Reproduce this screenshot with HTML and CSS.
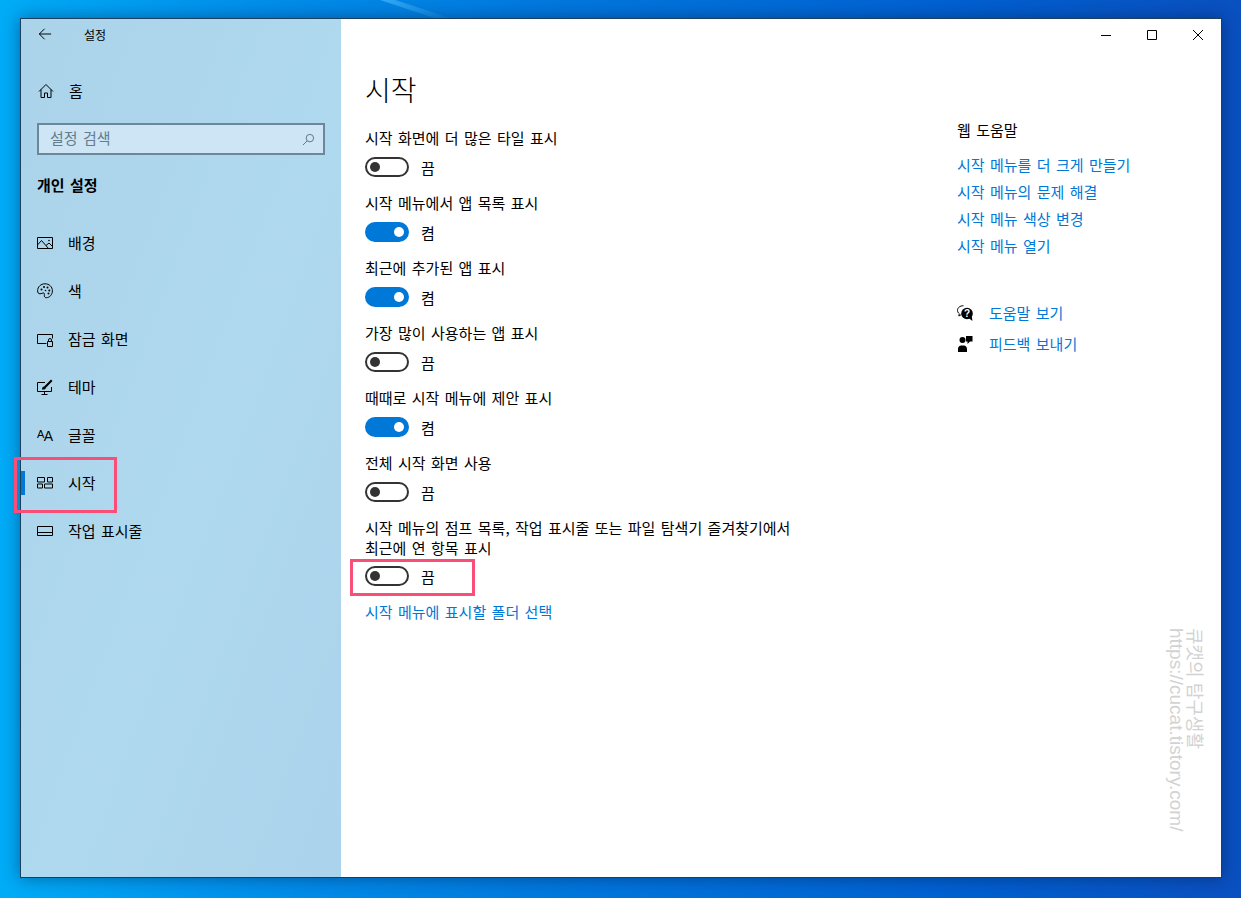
FILE: index.html
```html
<!DOCTYPE html>
<html lang="ko">
<head>
  <meta charset="UTF-8" />
  <meta name="viewport" content="width=device-width, initial-scale=1.0" />
  <title>설정 – 시작</title>
  <link rel="stylesheet" href="styles.css">
</head>
<body>
  <div class="streak"></div>

  <div class="window">
    <aside class="sidebar">
      <div class="titlebar">
        <svg class="back" viewBox="0 0 16 16"><path d="M15 8H1.500M7.500 2 1.500 8l6 6" /></svg>
        <span>설정</span>
      </div>

      <div class="home">
        <svg class="icon" viewBox="0 0 16 16"><path d="M1 8.500 8 1.500l7 7M3 6.500v8h3.500V10h3v4.500H13v-8" /></svg>
        <span>홈</span>
      </div>

      <div class="search">
        <span>설정 검색</span>
        <svg viewBox="0 0 14 14"><circle cx="8.500" cy="5.500" r="4" /><path d="M5.500 8.500 1 13" /></svg>
      </div>

      <h2>개인 설정</h2>

      <nav>
        <a class="item">
          <svg class="icon" viewBox="0 0 16 16"><path d="M.5 2.500h15v11H.5zM.5 10 4.500 5.500l7 8M9 10.500l3-2.500 3.500 3.500" /><circle class="dot" cx="12" cy="5.500" r=".8" /></svg>
          배경
        </a>
        <a class="item">
          <svg class="icon" viewBox="0 0 16 16"><path d="M8 .8C3.800.8.600 3.800.600 7.800c0 2 1 3 2.400 3 1.500 0 2.500-.9 3.400-.9 1.200 0 1 1.300.9 2.300-.1 1.600.6 2.500 1.900 2.500 3.700 0 6.200-3.300 6.200-6.900C15.400 3.800 12.200.8 8 .8z" /><circle class="dot" cx="4.500" cy="6.500" r="1" /><circle class="dot" cx="7" cy="4" r="1" /><circle class="dot" cx="10.500" cy="4.500" r="1" /><circle class="dot" cx="12.300" cy="7.500" r="1" /><circle class="dot" cx="11.500" cy="10.500" r="1" /><circle class="dot" cx="8.500" cy="7.500" r=".8" /></svg>
          색
        </a>
        <a class="item">
          <svg class="icon" viewBox="0 0 16 16"><path d="M9.500 12.500h-9v-9h15v4M10.500 10.500h5v5h-5zM11.500 10.500V9a1.500 1.500 0 0 1 3 0v1.500" /></svg>
          잠금 화면
        </a>
        <a class="item">
          <svg class="icon" viewBox="0 0 16 16"><path d="M8 3.500H.5v9h14V8M7.500 12.500v2.500M4.500 15.500h6" /><path class="solid" d="M5 10.500c0-2 .8-3 2.200-3L14 .5l1.500 1.500L8.700 9c0 1.200-1.500 1.700-3.700 1.500z" /></svg>
          테마
        </a>
        <a class="item">
          <span class="font-icon"><small>A</small>A</span>
          글꼴
        </a>
        <a class="item active">
          <svg class="icon" viewBox="0 0 16 16"><path d="M.5 2.500h7v4.500h-7zM10.500 2.500h5v4.500h-5zM.5 9h5v4h-5zM7.500 9h8v4h-8z" /></svg>
          시작
        </a>
        <a class="item">
          <svg class="icon" viewBox="0 0 16 16"><path d="M.5 3.500h15v9H.5zM.5 9.500h15" /></svg>
          작업 표시줄
        </a>
      </nav>
    </aside>

    <main class="content">
      <div class="controls">
        <button><svg viewBox="0 0 10 10"><path d="M0 5.500h10" /></svg></button>
        <button><svg viewBox="0 0 10 10"><path d="M.5.500h9v9h-9z" /></svg></button>
        <button><svg viewBox="0 0 10 10"><path d="M0 0l10 10M10 0 0 10" /></svg></button>
      </div>

      <div class="columns">
        <section class="settings">
          <h1>시작</h1>

          <div class="row">
            <label>시작 화면에 더 많은 타일 표시</label>
            <div class="switch"><span class="toggle"></span>끔</div>
          </div>
          <div class="row">
            <label>시작 메뉴에서 앱 목록 표시</label>
            <div class="switch"><span class="toggle on"></span>켬</div>
          </div>
          <div class="row">
            <label>최근에 추가된 앱 표시</label>
            <div class="switch"><span class="toggle on"></span>켬</div>
          </div>
          <div class="row">
            <label>가장 많이 사용하는 앱 표시</label>
            <div class="switch"><span class="toggle"></span>끔</div>
          </div>
          <div class="row">
            <label>때때로 시작 메뉴에 제안 표시</label>
            <div class="switch"><span class="toggle on"></span>켬</div>
          </div>
          <div class="row">
            <label>전체 시작 화면 사용</label>
            <div class="switch"><span class="toggle"></span>끔</div>
          </div>
          <div class="row">
            <label>시작 메뉴의 점프 목록, 작업 표시줄 또는 파일 탐색기 즐겨찾기에서 최근에 연 항목 표시</label>
            <div class="switch marked"><span class="toggle"></span>끔</div>
          </div>

          <a class="link">시작 메뉴에 표시할 폴더 선택</a>
        </section>

        <section class="help">
          <h3>웹 도움말</h3>
          <a class="link">시작 메뉴를 더 크게 만들기</a>
          <a class="link">시작 메뉴의 문제 해결</a>
          <a class="link">시작 메뉴 색상 변경</a>
          <a class="link">시작 메뉴 열기</a>

          <div class="help-actions">
            <a class="link">
              <svg viewBox="0 0 16 16"><path class="outline" d="M6.500.7C3 .7.500 2.700.500 5.300c0 1.400.7 2.600 1.800 3.400L1.800 11l2.700-1.500" /><circle cx="10" cy="8.500" r="5.800" /><path d="M11.500 13l4 3-.8-5z" /><text x="10" y="12" text-anchor="middle">?</text></svg>
              도움말 보기
            </a>
            <a class="link">
              <svg viewBox="0 0 16 16"><circle cx="5.500" cy="4" r="3" /><path d="M1 16v-3c0-2 1.500-3.500 3-3.500h3c1.500 0 3 1.500 3 3.500v3zM9 0h6.500v5.500H13L10.500 8V5.500H9z" /></svg>
              피드백 보내기
            </a>
          </div>
        </section>
      </div>

      <div class="watermark">
        <span class="blog">큐캣의 탐구생활</span>
        <span class="url">https://cucat.tistory.com/</span>
      </div>
    </main>
  </div>
</body>
</html>
```

FILE: styles.css
```css
*, *::before, *::after {
  box-sizing: border-box;
}

html, body {
  height: 100%;
}

body {
  margin: 0;
  padding: 18px 19px 20px 20px;
  overflow: hidden;
  position: relative;
  font-family: "Noto Sans CJK KR", "Noto Sans", sans-serif;
  font-size: 15px;
  word-spacing: 1.2px;
  color: #000;
  background: linear-gradient(90deg, #00acf7 0%, #0090ec 20%, #0078de 45%, #0062d2 75%, #0a50c0 100%);
}

.streak {
  position: absolute;
  top: 0;
  left: 380px;
  width: 70px;
  height: 18px;
  background: linear-gradient(90deg, rgba(70, 180, 250, .75), rgba(70, 180, 250, .1));
  clip-path: polygon(0 0, 22% 0, 100% 100%, 78% 100%);
}

.window {
  position: relative;
  display: flex;
  height: 860px;
  border: 1px solid #1c3f5f;
  background: #fff;
  box-shadow: 0 0 16px rgba(0, 20, 60, .45);
}

/* sidebar */
.sidebar {
  flex: 0 0 320px;
  padding: 0 16px;
  background: linear-gradient(110deg, #abd3ea 0%, #afd9ee 55%, #abd3ec 100%);
}

.titlebar {
  display: flex;
  align-items: center;
  height: 32px;
  padding-bottom: 2px;
  font-size: 12px;
  word-spacing: 0;
}

.back {
  width: 14px;
  height: 14px;
  margin: 0 32px 0 1px;
  fill: none;
  stroke: #000;
  stroke-width: 1.1;
}

.home {
  display: flex;
  align-items: center;
  gap: 15px;
  height: 48px;
  margin-top: 16px;
  padding: 0 0 2px 1px;
}

.icon {
  flex: none;
  width: 16px;
  height: 16px;
  margin-top: 2px;
  fill: none;
  stroke: #000;
  stroke-width: 1;
}

.icon .dot, .icon .solid {
  fill: #000;
  stroke: none;
}

.search {
  display: flex;
  align-items: center;
  justify-content: space-between;
  width: 288px;
  height: 32px;
  margin-top: 8px;
  padding: 0 8px 3px 11px;
  border: 2px solid #6c8799;
  background: #cde5f4;
  color: #667c8a;
}

.search svg {
  width: 13px;
  height: 13px;
  margin-top: 3px;
  fill: none;
  stroke: #5a6f7c;
  stroke-width: 1;
}

.sidebar h2 {
  height: 32px;
  margin: 14px 0 18px 0;
  font-size: 15px;
  font-weight: 700;
  line-height: 32px;
}

.item {
  position: relative;
  display: flex;
  align-items: center;
  gap: 15px;
  height: 48px;
  padding-bottom: 2px;
}

.font-icon {
  flex: none;
  width: 16px;
  margin-top: 2px;
  font-family: "Liberation Sans", sans-serif;
  font-size: 14px;
  line-height: 16px;
  letter-spacing: -.5px;
  white-space: nowrap;
}

.font-icon small {
  font-size: 11px;
  vertical-align: 3px;
}

.item.active::before {
  content: "";
  position: absolute;
  top: 12px;
  left: -16px;
  width: 4px;
  height: 24px;
  background: #0078d7;
}

.item.active::after {
  content: "";
  position: absolute;
  top: -2px;
  left: -23px;
  width: 103px;
  height: 56px;
  border: 3px solid #f94e78;
}

/* main */
.content {
  position: relative;
  flex: 1;
}

.controls {
  display: flex;
  justify-content: flex-end;
  height: 32px;
}

.controls button {
  width: 46px;
  height: 32px;
  padding: 0;
  border: none;
  background: transparent;
}

.controls svg {
  display: block;
  width: 10px;
  height: 10px;
  margin: 0 auto;
  fill: none;
  stroke: #000;
  stroke-width: 1;
}

.columns {
  display: grid;
  grid-template-columns: 616px 1fr;
}

.settings {
  padding-left: 24px;
}

h1 {
  height: 40px;
  margin: 18px 0 19px 0;
  font-size: 28px;
  font-weight: 300;
  line-height: 40px;
  word-spacing: 0;
}

.row {
  max-width: 440px;
  margin-bottom: 16px;
}

.row label {
  display: block;
  line-height: 20px;
  word-break: keep-all;
}

.switch {
  position: relative;
  display: flex;
  align-items: center;
  gap: 12px;
  height: 20px;
  margin-top: 9px;
}

.toggle {
  position: relative;
  flex: none;
  width: 44px;
  height: 20px;
  border: 2px solid #333;
  border-radius: 10px;
}

.toggle::after {
  content: "";
  position: absolute;
  top: 3px;
  left: 3px;
  width: 10px;
  height: 10px;
  border-radius: 50%;
  background: #333;
}

.toggle.on {
  border-color: #0078d7;
  background: #0078d7;
}

.toggle.on::after {
  left: auto;
  right: 3px;
  background: #fff;
}

.switch.marked {
  margin-top: 8px;
  margin-bottom: 15px;
}

.switch.marked::after {
  content: "";
  position: absolute;
  top: -7px;
  left: -15px;
  width: 125px;
  height: 37px;
  border: 3px solid #f94e78;
}

.link {
  display: block;
  line-height: 20px;
  color: #0078d7;
}

.help {
  padding-top: 69px;
}

.help h3 {
  margin: 0 0 15px 0;
  font-size: 15px;
  font-weight: 400;
  line-height: 20px;
}

.help > .link {
  margin-bottom: 7px;
}

.help-actions {
  display: flex;
  flex-direction: column;
  gap: 11px;
  margin-top: 47px;
}

.help-actions .link {
  display: flex;
  align-items: center;
  gap: 16px;
}

.help-actions svg {
  flex: none;
  width: 16px;
  height: 16px;
  fill: #000;
}

.help-actions .outline {
  fill: none;
  stroke: #000;
  stroke-width: 1;
}

.help-actions text {
  fill: #fff;
  font-family: "Liberation Sans", sans-serif;
  font-size: 10px;
  font-weight: 700;
}

.watermark {
  position: absolute;
  top: 609px;
  left: 825px;
  writing-mode: vertical-rl;
  text-orientation: sideways;
  white-space: nowrap;
  color: #d2d2d2;
  word-spacing: 0;
}

.watermark span {
  display: block;
  line-height: 20px;
}

.blog {
  font-size: 18px;
}

.url {
  font-family: "Liberation Sans", sans-serif;
  font-size: 19px;
}
```
